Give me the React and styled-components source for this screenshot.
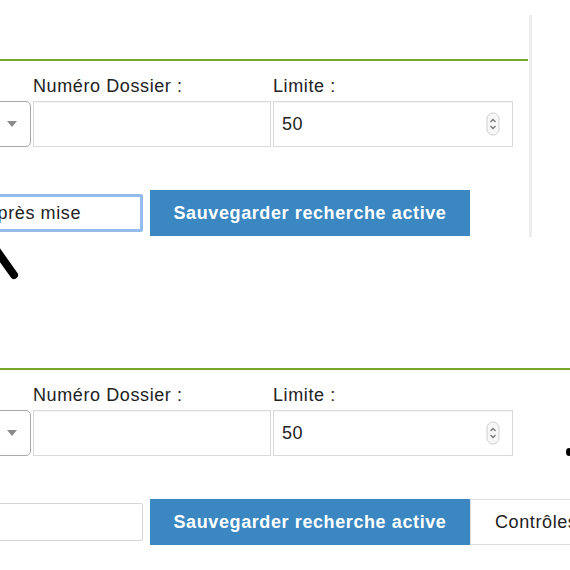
import React from "react";
import styled, { createGlobalStyle } from "styled-components";

const GlobalStyle = createGlobalStyle`
  body {
    margin: 0;
    background: #fff;
    font-family: "Liberation Sans", Arial, sans-serif;
  }
`;

const Page = styled.div`
  position: relative;
  width: 570px;
  height: 570px;
  overflow: hidden;
  background: #fff;
`;

const Shot = styled.section`
  display: flex;
  height: 309px;
`;

const Form = styled.div`
  flex: none;
  width: ${(p) => p.$width};
  padding-top: 59px;
`;

const Rule = styled.div`
  height: 2px;
  background: #78a82a;
`;

const Divider = styled.div`
  flex: none;
  width: 3px;
  height: 222px;
  margin: 15px 0 0 1px;
  background: #ededed;
`;

const Fields = styled.div`
  display: grid;
  grid-template-columns: 141px 238px 240px;
  column-gap: 2px;
  margin: 15px 0 0 -110px;
`;

const Field = styled.div`
  display: flex;
  flex-direction: column;
  gap: 5px;
`;

const Label = styled.label`
  height: 20px;
  font-size: 18px;
  line-height: 20px;
  letter-spacing: 0.6px;
  color: #222;
  white-space: nowrap;
`;

const Box = styled.div`
  box-sizing: border-box;
  height: 46px;
  display: flex;
  align-items: center;
  justify-content: space-between;
  background: #fff;
  border: 1px solid ${(p) => (p.$select ? "#a9a9a9" : "#d9d9d9")};
  border-radius: ${(p) => (p.$select ? "5px" : "0")};
  box-shadow: ${(p) => (p.$select ? "none" : "inset 0 1px 1px rgba(0,0,0,0.05)")};
  padding: ${(p) => (p.$select ? "0 13px 0 8px" : "0 12px 0 8px")};
  font-size: 18px;
  letter-spacing: 0.6px;
  color: #222;
`;

const Caret = styled.span`
  width: 0;
  height: 0;
  border-left: 5px solid transparent;
  border-right: 5px solid transparent;
  border-top: 6px solid #8a8a8a;
`;

const Actions = styled.div`
  display: flex;
  align-items: center;
  margin: 43px 0 0 -28px;
  white-space: nowrap;
`;

const TextInput = styled.div`
  box-sizing: border-box;
  flex: none;
  width: 171px;
  height: 38px;
  margin-right: 7px;
  display: flex;
  align-items: center;
  padding-left: 10px;
  border: ${(p) => (p.$focused ? "3px solid #93bbeb" : "1px solid #d4d4d4")};
  border-radius: 2px;
  font-size: 18px;
  letter-spacing: 0.6px;
  color: #222;
`;

const Button = styled.button`
  box-sizing: border-box;
  flex: none;
  height: 46px;
  width: ${(p) => p.$width || "auto"};
  padding: ${(p) => (p.$primary ? "0" : "0 24px")};
  border: 1px solid ${(p) => (p.$primary ? "#3a87c2" : "#dcdcdc")};
  background: ${(p) => (p.$primary ? "#3a87c2" : "#fff")};
  color: ${(p) => (p.$primary ? "#fff" : "#222")};
  font-family: "Liberation Sans", Arial, sans-serif;
  font-size: 18px;
  letter-spacing: 0.6px;
  font-weight: ${(p) => (p.$primary ? 700 : 400)};
  text-align: ${(p) => (p.$primary ? "center" : "left")};
`;

const Overlay = styled.svg`
  position: absolute;
  left: 0;
  top: 0;
  pointer-events: none;
`;

const Spinner = () => (
  <svg width="14" height="24" viewBox="0 0 14 24">
    <rect x="1" y="1" width="12" height="22" rx="6" fill="#f7f7f7" stroke="#cfcfcf" />
    <path d="M4.5 10 L7 7.5 L9.5 10" fill="none" stroke="#777" strokeWidth="1.4" />
    <path d="M4.5 14 L7 16.5 L9.5 14" fill="none" stroke="#777" strokeWidth="1.4" />
  </svg>
);

const SearchForm = ({ width, focused, extra }) => (
  <Form $width={width}>
    <Rule />
    <Fields>
      <Field>
        <Label />
        <Box $select>
          <span />
          <Caret />
        </Box>
      </Field>
      <Field>
        <Label>Numéro Dossier :</Label>
        <Box />
      </Field>
      <Field>
        <Label>Limite :</Label>
        <Box>
          <span>50</span>
          <Spinner />
        </Box>
      </Field>
    </Fields>
    <Actions>
      <TextInput $focused={focused}>{focused ? "Après mise" : ""}</TextInput>
      <Button $primary $width="320px">
        Sauvegarder recherche active
      </Button>
      {extra && <Button>{extra}</Button>}
    </Actions>
  </Form>
);

export default function App() {
  return (
    <>
      <GlobalStyle />
      <Page>
        <Shot>
          <SearchForm width="528px" focused />
          <Divider />
        </Shot>
        <Shot>
          <SearchForm width="600px" extra="Contrôles" />
        </Shot>
        <Overlay width="570" height="570">
          <line x1="-3" y1="251" x2="14" y2="275" stroke="#000" strokeWidth="8" strokeLinecap="round" />
          <ellipse cx="569" cy="452" rx="3" ry="4" fill="#000" />
        </Overlay>
      </Page>
    </>
  );
}
